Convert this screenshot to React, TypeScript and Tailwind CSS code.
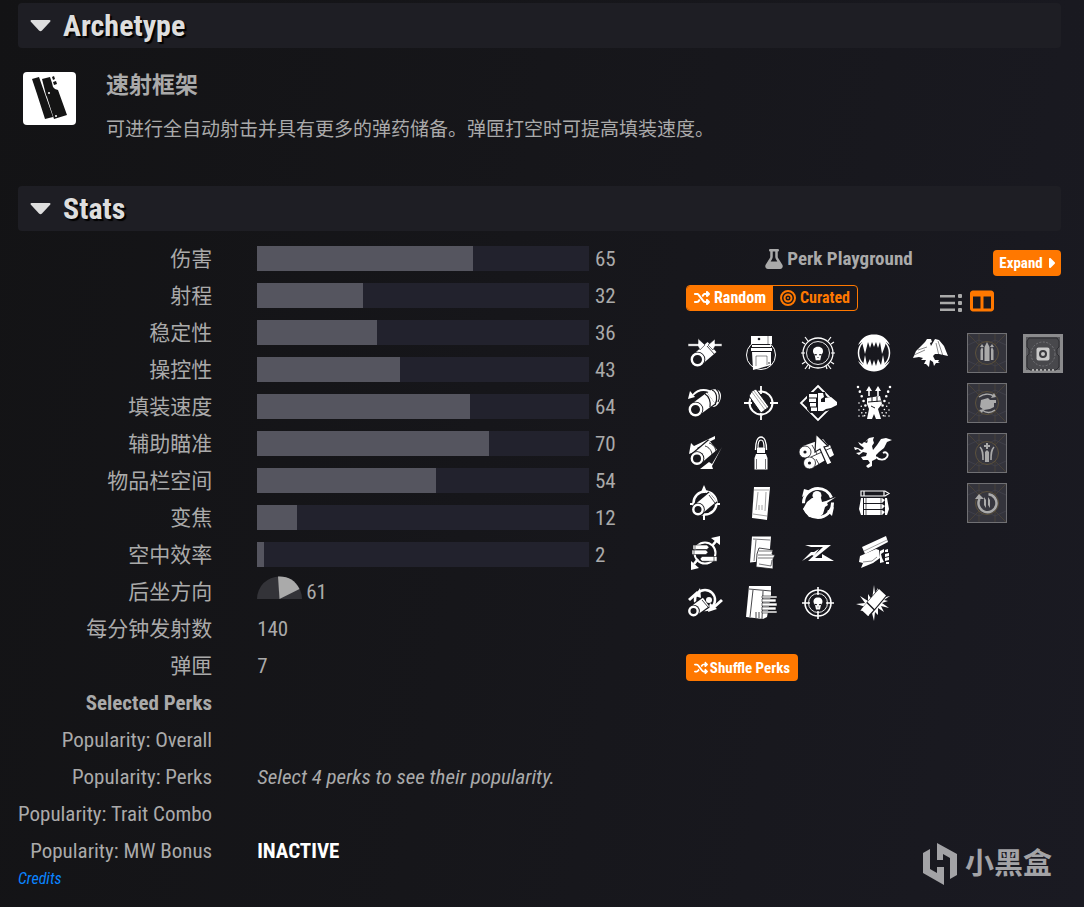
import { useState, type ReactNode } from 'react';
import {
  FaBullseye,
  FaCaretRight,
  FaFlask,
  FaShuffle,
  FaTableColumns,
} from 'react-icons/fa6';

const DARK = '#18181d';

const bars = [
  { label: '伤害', value: 65 },
  { label: '射程', value: 32 },
  { label: '稳定性', value: 36 },
  { label: '操控性', value: 43 },
  { label: '填装速度', value: 64 },
  { label: '辅助瞄准', value: 70 },
  { label: '物品栏空间', value: 54 },
  { label: '变焦', value: 12 },
  { label: '空中效率', value: 2 },
];

const Tube = ({ x, y, x2, y2, r = 7 }: { x: number; y: number; x2: number; y2: number; r?: number }) => (
  <g>
    <path d={`M${x} ${y}L${x2} ${y2}`} stroke={DARK} strokeWidth={r * 2 + 2} />
    <path d={`M${x} ${y}L${x2} ${y2}`} stroke="white" strokeWidth={r * 2 - 0.5} />
    <circle cx={x} cy={y} r={r + 0.8} fill={DARK} />
    <circle cx={x} cy={y} r={r - 1.3} fill={DARK} stroke="white" strokeWidth="2.4" />
  </g>
);

const Skull = ({ s = 1 }: { s?: number }) => (
  <g transform={`translate(20 20) scale(${s})`}>
    <path d="M0-7c-4 0-6 2.600-5.500 6 .2 1.700 1.500 2.600 1.800 3.500L-2.500 8h5l1.200-5.500C4 1.600 5.300.7 5.500-1 6-4.400 4-7 0-7z" />
    <path d="M-4 1l3 .5-.7 1.200-2-.3zM4 1L1 1.500l.7 1.200 2-.3zM-.5 4.500h1v1h-1z" fill={DARK} />
  </g>
);

const perkColumns: { name: string; art: ReactNode }[][] = [
  [
    {
      name: 'Choked barrel',
      art: (
        <>
          <Tube x={12.5} y={26.5} x2={27} y2={14} />
          <path d="M22 13l8 9" stroke={DARK} strokeWidth=".8" />
          <path d="M3 10.700h10V5.500l7 6.400-5 5-2-3.600H3z" stroke={DARK} strokeWidth=".6" />
          <path d="M37 10.700h-7V6l-7 6 5 5 2-3.700h7z" stroke={DARK} strokeWidth=".6" />
        </>
      ),
    },
    {
      name: 'Corkscrew rifling',
      art: (
        <>
          <path d="M26 7c6-2 10 1 10 6s-4 12-9 11L21 11z" />
          <path d="M27 7c5 2 6 9 3 15M31 6c4 3 4 9 2 13" fill="none" stroke={DARK} strokeWidth="1.200" />
          <Tube x={10.5} y={26.5} x2={26} y2={15} />
          <path d="M20 11c4 2 6 8 5 13" fill="none" stroke={DARK} strokeWidth="1.200" />
          <path d="M8 12c6-7 15-6 21-1" fill="none" stroke="white" strokeWidth="1.800" />
          <path d="M3 16l2-8 5 6z" />
        </>
      ),
    },
    {
      name: 'Extended barrel',
      art: (
        <>
          <path d="M30 3L9 13l-3-3-2 11 10-4-2-2 18-9z" />
          <path d="M37 14L27 31l-3-2-9 7h13l-1-3z" />
          <Tube x={12} y={25.5} x2={28} y2={12} r={6.5} />
          <path d="M20 13c4 1 7 5 7 9M24 10c4 1 7 5 7 9" fill="none" stroke={DARK} strokeWidth=".9" />
        </>
      ),
    },
    {
      name: 'Arrowhead brake',
      art: (
        <>
          <circle cx="20" cy="20" r="11.500" fill="none" stroke="white" strokeWidth="2.500" />
          <path d="M19 10V4M19 29v8M5 21h9M27 21h8" stroke="white" strokeWidth="2" />
          <path d="M19 2l3 7h-6z" />
          <Tube x={13} y={26.5} x2={28} y2={14} r={6} />
          <path d="M24 12l6 8" stroke={DARK} strokeWidth=".8" />
        </>
      ),
    },
    {
      name: 'Polygonal rifling',
      art: (
        <>
          <circle cx="20" cy="20" r="10.500" fill="none" stroke="white" strokeWidth="2" />
          <path d="M9 31l4-5M27 13l5-6" stroke="white" strokeWidth="2.600" />
          <path d="M35 3v9l-9-7zM6 37V28l8 7z" />
          <g stroke={DARK} strokeWidth=".6">
            <path d="M8 12h14l2 2.300-2 2.300H8zM7 17h14l2 2.300-2 2.300H7zM17 23.500h15v4.800H17l-2-2.400z" />
            <path d="M10 12v4M9 17v4M29 23v5" />
          </g>
        </>
      ),
    },
    {
      name: 'Fluted barrel',
      art: (
        <>
          <circle cx="20" cy="17" r="10" fill="none" stroke="white" strokeWidth="2.500" />
          <path d="M10 13l5-8 1 10z" />
          <path d="M4 17l9-8M37 17l-9 8" stroke="white" strokeWidth="3" />
          <path d="M25 20l-2 9 9-3z" />
          <Tube x={8.5} y={28} x2={21} y2={19} r={5.5} />
          <path d="M17 17l6 7" stroke={DARK} strokeWidth=".8" />
          <circle cx="24" cy="17" r="3" />
        </>
      ),
    },
  ],
  [
    {
      name: 'Tactical mag',
      art: (
        <>
          <circle cx="20" cy="22" r="14.500" fill="none" stroke="white" strokeWidth="1" />
          <path d="M10 3h21v8H10zM11 12h19v2H11zM10 15h21v3H10zM11 19h19v13l-18 5z" />
          <path d="M15 33V23h11v9M27 3v8" fill="none" stroke={DARK} strokeWidth=".5" />
          <circle cx="18" cy="6" r="1.300" fill={DARK} />
          <circle cx="28" cy="30" r=".8" fill={DARK} />
        </>
      ),
    },
    {
      name: 'Accurized rounds',
      art: (
        <>
          <circle cx="20" cy="20" r="11.500" fill="none" stroke="white" strokeWidth="2" />
          <path d="M20 3v8M20 29v8M3 20h8M29 20h8" stroke="white" strokeWidth="1.800" />
          <path d="M8 13l3-5 4-2 13 18-8 6z" stroke={DARK} strokeWidth="1" />
          <path d="M11 9l13 18M13 8l13 17" stroke={DARK} strokeWidth=".4" />
        </>
      ),
    },
    {
      name: 'Armor-piercing rounds',
      art: (
        <>
          <path d="M14.500 17c0-8 2-13 5.500-13s5.500 5 5.500 13" fill="none" stroke="white" strokeWidth="1.400" />
          <path d="M17 15c0-6 1-8 3-8s3 2 3 8z" stroke="white" fill="none" strokeWidth="1.200" />
          <path d="M16 15h8v5h-8zM15 21h10l1.500 4v11.500h-13V25z" />
          <path d="M15.500 26v10M24.500 26v10" stroke={DARK} strokeWidth=".6" />
        </>
      ),
    },
    {
      name: 'Light mag',
      art: (
        <>
          <path d="M13 4h16l-3 33-15-2z" />
          <path d="M13 7h15M17 9l-2 18M25 9l-1 19M18 22v5M21 22v5M12 31l14 2" fill="none" stroke={DARK} strokeWidth=".4" />
        </>
      ),
    },
    {
      name: 'Appended mag',
      art: (
        <>
          <path d="M11 3.500h19l-2 24-19 2z" />
          <path d="M12 6l17 1M15 7l-2 21" stroke={DARK} strokeWidth=".6" fill="none" />
          <path d="M18 15l14 2-1 4 3 1-2 4v10l-17-2 1-13z" stroke={DARK} strokeWidth=".8" />
          <path d="M18 18h13M17 22h16M17 25h15M18 31l12 2 1-6" fill="none" stroke={DARK} strokeWidth=".6" />
        </>
      ),
    },
    {
      name: 'Extended mag',
      art: (
        <>
          <path d="M8 3h22v9l-4 22-4 2-17-2z" />
          <path d="M8 6l22 2M12 7L9 34M22 8l-1 28M15 35v-6M18 35v-6" fill="none" stroke={DARK} strokeWidth=".8" />
          <path d="M21 13h15v2H21zM21 16h14v3H21zM21 20h15v3H21zM21 24h14v3H21zM21 28h15v2H21z" stroke={DARK} strokeWidth=".6" />
        </>
      ),
    },
  ],
  [
    {
      name: 'Opening shot',
      art: (
        <>
          <circle cx="20" cy="20" r="15" fill="none" stroke="white" strokeWidth="1.300" />
          <circle cx="20" cy="20" r="11.500" fill="none" stroke="white" strokeWidth=".9" />
          <path
            d="M10 8L7 4M7 11L4 9M30 8l3-4M33 11l3-2M10 32l-3 4M7 29l-3 2M30 32l3 4M33 29l3 2M3 20h4M33 20h4M28 33l1 3M12 33l-1 3"
            stroke="white"
            strokeWidth="1.200"
          />
          <Skull s={0.9} />
        </>
      ),
    },
    {
      name: 'Quickdraw',
      art: (
        <>
          <path d="M20 3l17 17-17 17L3 20z" fill="none" stroke="white" strokeWidth="1.800" />
          <path d="M9 9h18l1 5 10 1v10l-9 3-6 1-11 1-3-4z" fill={DARK} />
          <path d="M11 11h8v3.500h-8zM11 15.500h7V19h-7zM12 20h6v3.500h-6zM13 24.500h6V28h-6z" />
          <path d="M20 10h5l1 4-3 2v3h4v-4l6-1 6 5v3l-6 3-5 1-3 2h-5V19z" />
        </>
      ),
    },
    {
      name: 'Ambitious loader',
      art: (
        <>
          <path d="M5 13L25 6l8 10-22 9z" />
          <path d="M10 24l22-12 4 10-22 13z" />
          <g stroke={DARK} strokeWidth=".8">
            <circle cx="7" cy="19" r="6" fill="white" />
            <circle cx="11.500" cy="30" r="6" fill="white" />
            <path d="M13 24l22-10M14 12l5 9M18 26l4 7" />
          </g>
          <circle cx="7" cy="19" r="1.600" fill={DARK} />
          <circle cx="11.500" cy="30" r="1.600" fill={DARK} />
          <path d="M18 1l12 12-4 1 8 16-5 2-7-16-5 3z" stroke={DARK} strokeWidth="1.200" />
        </>
      ),
    },
    {
      name: 'Perpetual motion',
      art: (
        <>
          <circle cx="20" cy="20" r="14.500" fill="none" stroke="white" strokeWidth="3" strokeDasharray="40 5" />
          <path d="M4 14l2-8 7 2zM36 24l-2 9-5-5z" />
          <circle cx="19" cy="12.500" r="4.500" />
          <path d="M14 15l9 0 1 4 4-1 10-4-9 6 1 2-3 2-2 7-5 4-9-1-6-8 4-7z" />
        </>
      ),
    },
    {
      name: 'Zen moment',
      art: (
        <>
          <path d="M7 12h26L17 25h7v-4l12 7H10L25 14H13z" />
          <path d="M4 28l9-9 3 0 5-3-5 7-2-1z" />
        </>
      ),
    },
    {
      name: 'Explosive head',
      art: (
        <>
          <circle cx="20" cy="20" r="13" fill="none" stroke="white" strokeWidth="1.600" />
          <circle cx="20" cy="20" r="9.500" fill="none" stroke="white" strokeWidth=".9" />
          <path d="M20 4v8M20 28v8M4 20h8M28 20h8" stroke="white" strokeWidth="1.600" />
          <Skull s={0.8} />
        </>
      ),
    },
  ],
  [
    {
      name: 'Feeding frenzy',
      art: (
        <>
          <circle cx="20" cy="20" r="15.500" fill="none" stroke="white" strokeWidth="1.500" />
          <path d="M4 12C8 4 13 1.500 20 1.500S32 4 36 12l-4-3-1 4-3 8-2-12-2 6-2-6-2 5-2-5-2 6-2-6-3 12-3-12zM4 28c4 7 9 10.500 16 10.500S32 35 36 28l-5 4-2-10-2 10-3-6-2 7-2-6-2 6-2-7-3 6-2-10-2 10z" />
        </>
      ),
    },
    {
      name: 'Kinetic tremors',
      art: (
        <>
          <path d="M14.200 13V8H12l3-5 3 5h-2.200v5zM23.200 13V8H21l3-5 3 5h-2.200v5z" />
          <path d="M13 15l13-2 2 8-4 5 3 10h-5l-2-5-2 5h-5l2-10-2-5z" />
          <path d="M14 19l13-1M18 14v5M23 14v5M17 23l4 2" stroke={DARK} strokeWidth="1" />
          <path d="M4 4l8 20M36 4l-8 20" stroke="white" strokeWidth="2.600" strokeLinecap="round" strokeDasharray="0 5" />
          <path d="M5 20l7 10M35 20l-7 10M5 27l8 8M35 27l-8 8M5 33h7M35 33h-7" stroke="white" strokeWidth="1.600" strokeLinecap="round" strokeDasharray="0 4" />
        </>
      ),
    },
    {
      name: 'Voltshot',
      art: (
        <>
          <path d="M11 9l4-4 5-1-1 3 1 3-2 3 1 4 4-5 4-6 5-1 6 2-5 2-3 6-5 4-3 3 0 4-4 2 0 5-4 2-2-2 4-3-2-3-5 0-2-3 5-1 1-3-4-1-4 3-3-2 5-1-3-3-3 1-1-3 4 1 4 2 2-2-4-3-2-3 4 2 2-2 3 1 1-3z" />
          <path d="M22 24c4 4 9 3 11 0s-1-6-4-4" fill="none" stroke="white" strokeWidth="1.800" />
        </>
      ),
    },
    {
      name: 'Fourth time reserve',
      art: (
        <>
          <path d="M7 8h24l4 2.500-4 2.500H7zM10 8v5M30 8v5" fill="none" stroke="white" strokeWidth="1.200" />
          <path d="M7 15h2v17H7l-2-6zM31 15h2l2 11-2 6h-2z" />
          <path d="M10 15h18l3 2-3 3H10zM10 21h18l3 2-3 3H10zM10 27h18l3 2-3 3H10z" />
          <path d="M12 15v17M27 15v17" stroke={DARK} strokeWidth=".7" />
        </>
      ),
    },
    {
      name: 'Slideshot',
      art: (
        <>
          <path d="M8 14L32 3l2 6-23 12z" />
          <path d="M10 18L33 7" stroke={DARK} strokeWidth=".4" />
          <path d="M6 23l16-7 3 1 1 8-7 5-12 5 2-5-4-1z" />
          <path d="M9 29l9-1 5-4" stroke={DARK} fill="none" strokeWidth=".5" />
          <path d="M26 18l4-2v3l-3 2 1 4 2 4-4 1zM31 17l3-1v3h-3zM31 21l4-1v3l-4 1zM31 25l4-1v3l-4 1zM32 29h3v2h-3z" />
        </>
      ),
    },
    {
      name: 'Frenzy',
      art: (
        <>
          <path d="M20 2l1 8 3-5v7l5-3-2 6 9-2-6 4 4 1-6 2 7 5-8-2 3 6-6-4 0 7-3-3-1 9-2-8-4 3 0-6-8 1 6-4-10-3 9-1-5-7 8 5 0-7 4 6z" />
          <path d="M7 26L25 5l8 8-17 20z" fill={DARK} />
          <path d="M13.500 19L25 6l7 6.500L20.500 26zM12.500 20l7 7-5.500 6-7-6.500z" />
        </>
      ),
    },
  ],
  [
    {
      name: 'Field-tested',
      art: (
        <>
          <path d="M15 9l2-3 4 0 1 3-2 1 1 3 4-7 4 1 5 6 4 10-9-2-4 0-2 2 2 4 4 0-1 2 2 1-4 0-2 3-1-4-3-2-1 7-3-3-2 0 2-4-5 0 2-2-4-1-6 1 3-7 9-9z" />
          <path
            d="M4 22l11-5M8 17l9-3M26 10l3 13M28 8l5 15"
            stroke={DARK}
            strokeWidth=".5"
          />
        </>
      ),
    },
  ],
];

const mods: { name: string; art: ReactNode }[] = [
  {
    name: 'Backup mag',
    art: <path d="M20 9l2.500 5v14h-5V14zM15 14l1 2v11h-2.500V17zM25 14l-1 2v11h2.500V17zM13 14h4l-2-3zM23 14h4l-2-3z" />,
  },
  {
    name: 'Quick access sling',
    art: (
      <>
        <path d="M14 17l7-2 2 2h6v3h-2v4l-4 2-6 1-4-3z" />
        <path d="M12 14c4-3 10-4 15-1M28 27c-4 3-9 3-13 0" fill="none" stroke="#aaa" strokeWidth="1.500" />
        <path d="M29 14l-5 1 3-5zM12 27l5-1-2 4z" />
      </>
    ),
  },
  {
    name: 'Icarus grip',
    art: (
      <>
        <path d="M19 10h2v2h2v2h-2v2h-2v-2h-2v-2h2zM18 19l2-2 2 2v10h-4z" />
        <path d="M13 14c3 3 3 7 3 13M27 14c-3 3-3 7-3 13" fill="none" stroke="#aaa" strokeWidth="1.600" />
      </>
    ),
  },
  {
    name: 'Freehand grip',
    art: (
      <>
        <path d="M12.500 16a9 9 0 1 0 9-4.800" fill="none" stroke="#aaa" strokeWidth="2.500" />
        <path d="M8 16l4-5 5 5zM17 14l2 3v8l-2-3zM21 14l2 3v8l-2-3z" />
      </>
    ),
  },
];

const Perk = ({ name, children }: { name: string; children: ReactNode }) => (
  <button type="button" aria-label={name} className="block size-10">
    <svg viewBox="0 0 40 40" className="size-10" fill="white" aria-hidden="true">
      {children}
    </svg>
  </button>
);

const ModArt = ({ children }: { children: ReactNode }) => (
  <>
    <rect x=".5" y=".5" width="39" height="39" fill="#34343c" stroke="#707074" />
    <path d="M1 1l38 38M39 1L1 39M12 1v38M28 1v38" stroke="#514837" strokeWidth=".7" />
    <path d="M1 12l11-5 8 4 8-4 11 5M1 28l11 5 8-4 8 4 11-5" fill="none" stroke="#43434c" strokeWidth=".8" />
    <circle cx="20" cy="20" r="11.500" fill="#37373f" stroke="#5d523c" />
    <g fill="#aaa">{children}</g>
  </>
);

const Section = ({ title, children }: { title: string; children: ReactNode }) => {
  const [open, setOpen] = useState(true);

  return (
    <section>
      <h2 className="mr-0.5">
        <button
          type="button"
          aria-expanded={open}
          onClick={() => setOpen(!open)}
          className="flex h-[45px] w-full items-center rounded bg-[#1e1e24] pl-3 text-[30px] font-bold text-[#dedede] [text-shadow:2px_2px_1px_#000]"
        >
          <svg viewBox="0 0 21 12" className="mr-3 h-3 w-[21px]" fill="#dedede" aria-hidden="true">
            <path d="M1.500 0h18c1 0 1.300 1 .6 1.800L12 10.500c-.9.900-2.100.900-3 0L.9 1.800C.2 1 .5 0 1.500 0z" />
          </svg>
          {title}
        </button>
      </h2>
      {open && children}
    </section>
  );
};

const StatRow = ({ label, bold, children }: { label: string; bold?: boolean; children?: ReactNode }) => (
  <tr className="h-[37px]">
    <th scope="row" className={`w-[193px] p-0 text-right whitespace-nowrap ${bold ? 'font-bold' : 'font-normal'}`}>
      {label}
    </th>
    <td className="p-0 pl-[45px]">{children}</td>
  </tr>
);

const PerkPlayground = () => {
  return (
    <div className="w-[378px] shrink-0">
      <div className="flex h-[38px] items-center">
        <h3 className="flex flex-1 items-center justify-center gap-1 text-[19px] font-bold">
          <FaFlask className="h-5 w-[18px]" />
          Perk Playground
        </h3>
        <button
          type="button"
          className="mt-2 mr-0.5 flex h-[26px] w-[68px] items-center justify-center gap-1 rounded bg-[#ff7800] text-[15px] font-bold text-white"
        >
          Expand
          <FaCaretRight className="h-4 w-2" />
        </button>
      </div>

      <div className="mt-[7px] flex">
        <div className="ml-px flex h-[26px] w-[172px] overflow-hidden rounded border border-[#ff7800] text-[16px] font-bold">
          <button type="button" className="flex w-[86px] items-center justify-center gap-1 bg-[#ff7800] text-white">
            <FaShuffle className="size-4" />
            Random
          </button>
          <button type="button" className="flex flex-1 items-center justify-center gap-1 text-[#ff7800]">
            <FaBullseye className="size-4" />
            Curated
          </button>
        </div>
        <div className="mt-1 mr-[69px] ml-auto flex items-center gap-2">
          <button type="button" aria-label="List view" className="pt-1">
            <svg viewBox="0 0 22 18" className="h-[18px] w-[22px]" fill="#aaa" aria-hidden="true">
              <path d="M0 1h15v2.500H0zM0 7.800h15v2.500H0zM0 14.600h15V17H0z" />
              <rect x="18" width="4" height="4" rx="1" />
              <rect x="18" y="7" width="4" height="4" rx="1" />
              <rect x="18" y="14" width="4" height="4" rx="1" />
            </svg>
          </button>
          <button type="button" aria-label="Column view">
            <FaTableColumns className="size-6 text-[#ff7800]" />
          </button>
        </div>
      </div>

      <div className="mt-5 flex justify-between">
        {perkColumns.map((column, idx) => (
          <div key={idx} className="flex flex-col gap-2.5">
            {column.map((perk) => (
              <Perk key={perk.name} name={perk.name}>
                {perk.art}
              </Perk>
            ))}
          </div>
        ))}
        <div className="flex flex-col gap-2.5">
          {mods.map((mod) => (
            <Perk key={mod.name} name={mod.name}>
              <ModArt>{mod.art}</ModArt>
            </Perk>
          ))}
        </div>
        <Perk name="Masterwork">
          <rect x="1.500" y="2.500" width="37" height="36" fill="#56565a" stroke="#8b8b8d" strokeWidth="3" />
          <path d="M6 5h28l2 3v6l-2 2v5l2 2v11l-3 3H7l-3-3V23l2-2v-5l-2-2V8z" fill="#48484c" stroke="#2d2d31" />
          <circle cx="20" cy="21" r="12" fill="none" stroke="#727276" strokeDasharray="2 1.500" />
          <rect x="13.500" y="14.500" width="13" height="13" rx="2" fill="#c8c8c8" />
          <circle cx="20" cy="21" r="3" fill="#c8c8c8" stroke="#3a3a3e" strokeWidth="2" />
          <path d="M9 37h22" stroke="#aaa" strokeWidth="2" strokeDasharray="2 2" />
        </Perk>
      </div>

      <button
        type="button"
        className="mt-[31px] ml-px flex h-[27px] w-28 items-center justify-center gap-0.5 rounded bg-[#ff7800] text-[15px] font-bold text-white"
      >
        <FaShuffle className="size-3.5" />
        Shuffle Perks
      </button>
    </div>
  );
};

const App = () => {
  return (
    <main className="relative min-h-screen bg-[linear-gradient(100deg,#131315_0%,#16161a_45%,#1a1a22_100%)] pt-[3px] pr-[21px] pb-4 pl-[18px] font-['Roboto_Condensed','Noto_Sans_CJK_SC',sans-serif] text-[21px] leading-7 text-[#aaa]">
      <Section title="Archetype">
        <div className="flex h-[138px] gap-[30px] pt-6 pl-[5px]">
          <svg viewBox="0 0 53 53" className="size-[53px] shrink-0 rounded bg-white" fill="#141414" aria-hidden="true">
            <path d="M9 7l7-2 14 40-8 2L14 22zM19 7l8-2 2 6 1 4 2 2 3 1 9 25-13 4-7-22-1-2z" />
            <path d="M29 5l2-1 1 3-2 1zM30 10l3-1 1 3-3 1z" />
            <circle cx="26" cy="21" r="1" fill="white" />
            <circle cx="33" cy="44" r="1" fill="white" />
          </svg>
          <div>
            <h3 className="text-[23px] font-bold">速射框架</h3>
            <p className="mt-4 text-[19px]">可进行全自动射击并具有更多的弹药储备。弹匣打空时可提高填装速度。</p>
          </div>
        </div>
      </Section>

      <Section title="Stats">
        <div className="mt-[9px] flex items-start justify-between">
          <table className="mr-[46px] flex-1 border-collapse">
            <tbody>
              {bars.map((bar) => (
                <StatRow key={bar.label} label={bar.label}>
                  <div className="flex items-center gap-1.5">
                    <div className="h-[25px] flex-1 bg-[#22222d]">
                      <div className="h-full bg-[#55555f]" style={{ width: `${bar.value}%` }} />
                    </div>
                    <span className="w-11">{bar.value}</span>
                  </div>
                </StatRow>
              ))}
              <StatRow label="后坐方向">
                <div className="flex items-center gap-1">
                  <svg viewBox="0 0 45 23" className="mb-2 h-[23px] w-[45px]" aria-hidden="true">
                    <path d="M0 23a22.500 22.500 0 0 1 45 0z" fill="#333338" />
                    <path d="M22.500 23L21 .5C31 0 38 4 42.500 13z" fill="#aaa" />
                  </svg>
                  61
                </div>
              </StatRow>
              <StatRow label="每分钟发射数">140</StatRow>
              <StatRow label="弹匣">7</StatRow>
              <StatRow label="Selected Perks" bold />
              <StatRow label="Popularity: Overall" />
              <StatRow label="Popularity: Perks">
                <em>Select 4 perks to see their popularity.</em>
              </StatRow>
              <StatRow label="Popularity: Trait Combo" />
              <StatRow label="Popularity: MW Bonus">
                <strong className="text-white">INACTIVE</strong>
              </StatRow>
            </tbody>
          </table>
          <PerkPlayground />
        </div>
      </Section>

      <a href="#credits" className="block w-fit text-[16px] leading-5 text-[#0a84ff] italic">
        Credits
      </a>

      <div className="absolute right-8 bottom-[22px] flex items-center gap-2 text-[29px] leading-10 font-bold text-[#a3a3a6]">
        <svg viewBox="0 0 34 42" className="h-[42px] w-[34px]" fill="#a3a3a6" aria-hidden="true">
          <path d="M0 10l7-4v20l7 4v-6h7v18L0 30zM14 0l20 11v21l-7 4V15l-7-4v6h-6z" />
        </svg>
        小黑盒
      </div>
    </main>
  );
};

export default App;
